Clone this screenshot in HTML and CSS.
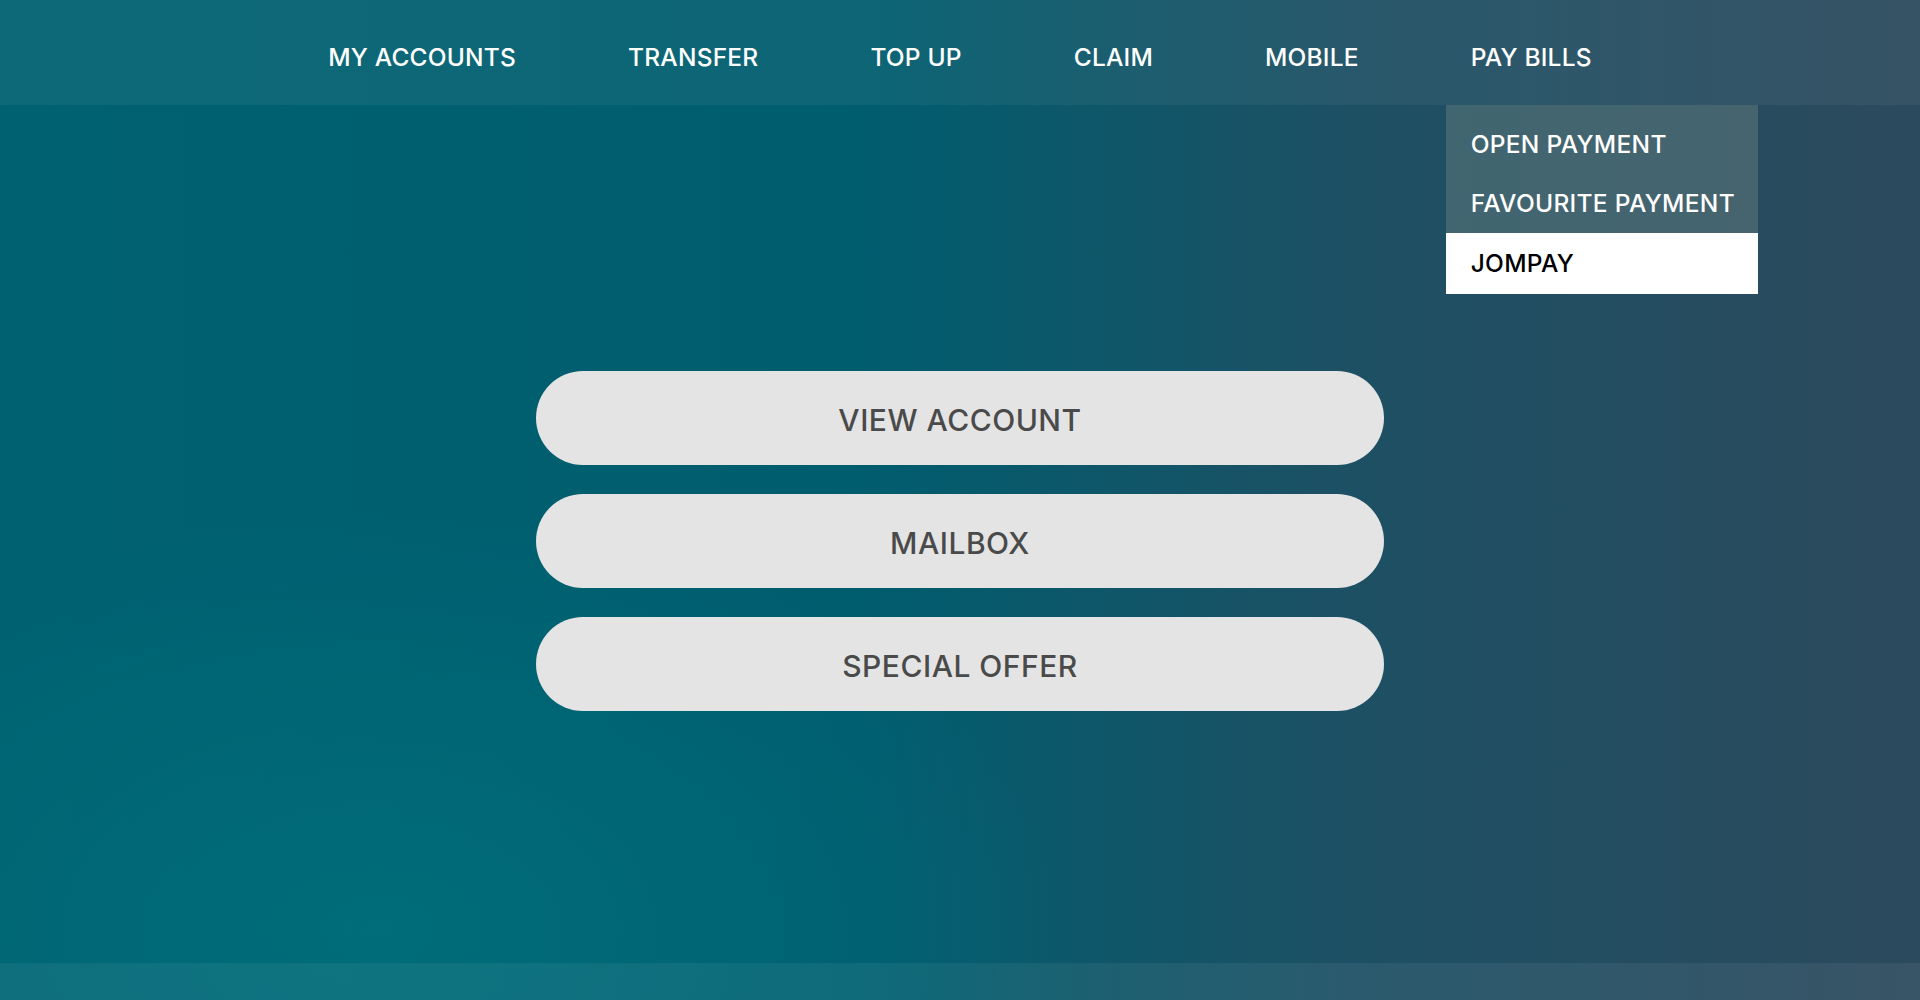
FILE: index.html
```html
<!DOCTYPE html>
<html lang="en">
<head>
    <meta charset="UTF-8">
    <meta name="viewport" content="width=device-width, initial-scale=1.0">
    <title>Dashboard</title>
    <link rel="stylesheet" href="styles.css">
</head>
<body>
    <nav class="topbar">
        <ul class="menu">
            <li><a href="#">MY ACCOUNTS</a></li>
            <li><a href="#">TRANSFER</a></li>
            <li><a href="#">TOP UP</a></li>
            <li><a href="#">CLAIM</a></li>
            <li><a href="#">MOBILE</a></li>
            <li class="has-sub">
                <a href="#">PAY BILLS</a>
                <ul class="submenu">
                    <li><a href="#">OPEN PAYMENT</a></li>
                    <li><a href="#">FAVOURITE PAYMENT</a></li>
                    <li class="active"><a href="#">JOMPAY</a></li>
                </ul>
            </li>
        </ul>
    </nav>
    <main class="content">
        <div class="actions">
            <a href="#" class="pill">VIEW ACCOUNT</a>
            <a href="#" class="pill">MAILBOX</a>
            <a href="#" class="pill">SPECIAL OFFER</a>
        </div>
    </main>
    <footer class="bottombar"></footer>
</body>
</html>
```

FILE: styles.css
```css
*{margin:0;padding:0;box-sizing:border-box}
html, body{height:100%}
body{
    display: flex;
    flex-direction: column;
    font-family: "Inter", "DejaVu Sans", sans-serif;
    color: #fff;
    background:
        radial-gradient(ellipse 700px 420px at 380px 930px, rgba(0, 120, 130, 0.55), rgba(0, 120, 130, 0) 100%),
        linear-gradient(to right, #006170 0%, #005d6e 45%, #1d5064 70%, #2c4a5d 100%);
}
a{text-decoration:none;color:inherit}

.topbar{
    height: 105px;
    flex-shrink: 0;
    background-color: rgba(255, 255, 255, 0.05);
}
.menu{
    list-style: none;
    display: flex;
    justify-content: center;
    align-items: center;
    height: 100%;
    gap: 112px;
}
.menu > li{
    position: relative;
    height: 100%;
    display: flex;
    align-items: center;
    padding-top: 8px;
}
.menu > li > a{
    font-size: 24.5px;
    font-weight: 500;
    letter-spacing: 0.2px;
}

.submenu{
    list-style: none;
    position: absolute;
    top: 105px;
    left: -25px;
    width: 312px;
    padding-top: 10px;
    background-color: rgba(125, 145, 140, 0.35);
}
.submenu li a{
    display: block;
    height: 59px;
    line-height: 59px;
    padding-left: 25px;
    font-size: 24.5px;
    font-weight: 500;
    letter-spacing: 0.3px;
    white-space: nowrap;
}
.submenu li.active a{
    height: 61px;
    line-height: 61px;
    background-color: #fff;
    color: #000;
}

.content{
    flex: 1;
    display: flex;
    justify-content: center;
    align-items: center;
    padding-top: 14px;
}
.actions{
    width: 848px;
    display: flex;
    flex-direction: column;
    gap: 29px;
}
.pill{
    display: flex;
    justify-content: center;
    align-items: center;
    height: 94px;
    padding-top: 4px;
    border-radius: 47px;
    background-color: #e4e4e4;
    color: #4a4a4a;
    font-size: 30px;
    font-weight: 500;
    letter-spacing: 0.5px;
}

.bottombar{
    height: 37px;
    flex-shrink: 0;
    background-color: rgba(255, 255, 255, 0.06);
}
```
